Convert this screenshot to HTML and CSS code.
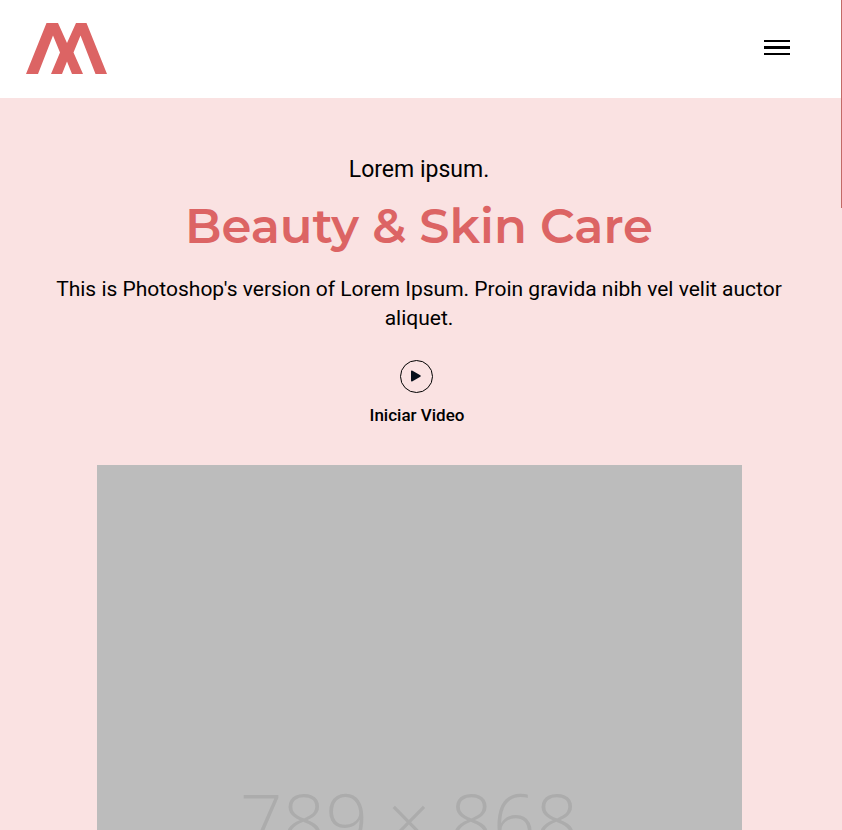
FILE: index.html
```html
<!DOCTYPE html>
<html lang="en">
<head>
  <meta charset="utf-8">
  <meta name="viewport" content="width=device-width, initial-scale=1">
  <title>Beauty &amp; Skin Care</title>
  <link rel="stylesheet" href="styles.css">
</head>
<body>
  <header class="header">
    <a class="logo" href="#" aria-label="Home">
      <svg width="82" height="52" viewBox="0 0 82 52" aria-hidden="true">
        <path fill="#dc6464" d="M0 51 20.500 0H32L41 20 50 0H60.500L81 51H69.500L54.500 12.500 47.500 29.500 57 51H46L41 38.500 36 51H25L34 29.500 27 12.500 12 51Z"/>
      </svg>
    </a>
    <button class="menu" type="button" aria-label="Open menu">
      <svg width="26" height="16" viewBox="0 0 26 16" aria-hidden="true">
        <path d="M0 0H26V2H0ZM0 6H26V9H0ZM0 13H26V15H0Z"/>
      </svg>
    </button>
  </header>
  <main class="hero">
    <p class="eyebrow">Lorem ipsum.</p>
    <h1 class="title">Beauty &amp; Skin Care</h1>
    <p class="lead">This is Photoshop's version of Lorem Ipsum. Proin gravida nibh vel velit auctor aliquet.</p>
    <button class="video" type="button">
      <svg width="33" height="33" viewBox="0 0 33 33" aria-hidden="true">
        <circle cx="16.500" cy="16.500" r="16" fill="none" stroke="#000"/>
        <path fill="#06101c" d="M11 11.500Q11 10 12.500 10.700L20.300 15.300Q21.500 16 20.300 16.700L12.500 21.300Q11 22 11 20.500Z"/>
      </svg>
      <span>Iniciar Video</span>
    </button>
    <div class="placeholder">789 × 868</div>
  </main>
  <div class="scroll-thumb"></div>
</body>
</html>
```
FILE: styles.css
```css
* {
  box-sizing: border-box;
}

body {
  margin: 0;
  background: #fae2e2;
  color: #000;
  font-family: Roboto, "Liberation Sans", sans-serif;
}

.header {
  display: flex;
  align-items: center;
  justify-content: space-between;
  height: 98px;
  padding: 0 52px 0 26px;
  background: #fff;
}

.logo,
.menu svg,
.logo svg {
  display: block;
}

.menu {
  padding: 0 0 2px;
  border: 0;
  background: none;
  cursor: pointer;
}

.hero {
  display: flex;
  flex-direction: column;
  align-items: center;
  padding: 56px 48px 0 44px;
  text-align: center;
}

.eyebrow {
  margin: 0;
  font-size: 23px;
  line-height: 32px;
}

.title {
  margin: 8px 0 16px;
  color: #dc6464;
  font-family: Montserrat, Inter, sans-serif;
  font-size: 48px;
  font-weight: 600;
  line-height: 64px;
}

.lead {
  margin: 0;
  padding-top: 1px;
  font-size: 21px;
  line-height: 29px;
}

.video {
  display: flex;
  flex-direction: column;
  align-items: center;
  gap: 12px;
  margin: 27px 0 40px;
  padding: 0 4px 0 0;
  border: 0;
  background: none;
  color: inherit;
  font: 500 17px/20px Roboto, "Liberation Sans", sans-serif;
  cursor: pointer;
}

.placeholder {
  display: grid;
  place-items: center;
  width: 86%;
  aspect-ratio: 789 / 868;
  padding-right: 20px;
  background: #bcbcbc;
  color: #acacac;
  font-family: "Open Sans", sans-serif;
  font-size: 75px;
  font-weight: 300;
}

.scroll-thumb {
  position: fixed;
  top: 0;
  right: 0;
  width: 1px;
  height: 25vh;
  background: #c26a66;
}
```
